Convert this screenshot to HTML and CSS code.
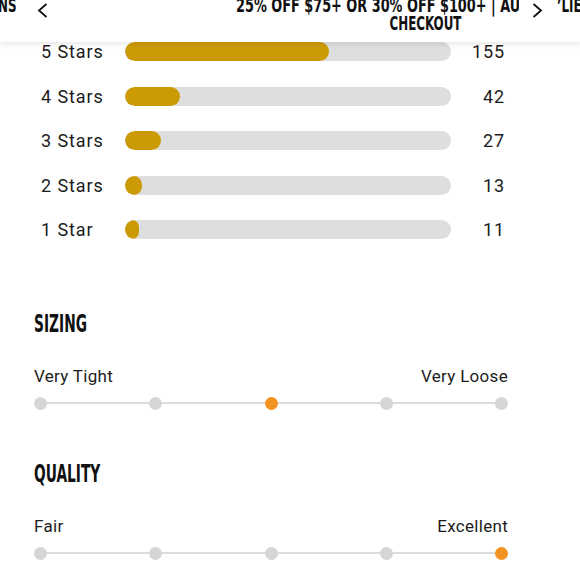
FILE: index.html
```html
<!DOCTYPE html>
<html lang="en">
<head>
<meta charset="utf-8">
<title>Reviews</title>
<link rel="stylesheet" href="styles.css">
</head>
<body>
<header class="promo">
  <div class="peek peek-left"><span class="promo-line">SHOP NEW ARRIVALS | FREE RETURNS</span></div>
  <button class="nav nav-prev" aria-label="Previous">
    <svg viewBox="0 0 11 15" width="11" height="15"><polyline points="9.5,1 2,7.5 9.5,14" fill="none" stroke="#111" stroke-width="1.8"/></svg>
  </button>
  <div class="viewport">
    <div class="slide">
      <div class="slide-row first"><span class="promo-line">25% OFF $75+ OR 30% OFF $100+ | AUTO-APPLIED AT</span></div>
      <div class="slide-row second"><span class="promo-line">CHECKOUT</span></div>
    </div>
  </div>
  <button class="nav nav-next" aria-label="Next">
    <svg viewBox="0 0 11 15" width="11" height="15"><polyline points="1.5,1 9,7.5 1.5,14" fill="none" stroke="#111" stroke-width="1.8"/></svg>
  </button>
  <div class="peek peek-right"><span class="promo-line">’LIEBE SALE</span></div>
</header>

<main class="reviews">
  <section class="ratings">
    <div class="rating-row"><span class="rating-label">5 Stars</span><div class="bar"><div class="fill" style="width:62.5%"></div></div><span class="rating-count">155</span></div>
    <div class="rating-row"><span class="rating-label">4 Stars</span><div class="bar"><div class="fill" style="width:16.9%"></div></div><span class="rating-count">42</span></div>
    <div class="rating-row"><span class="rating-label">3 Stars</span><div class="bar"><div class="fill" style="width:10.9%"></div></div><span class="rating-count">27</span></div>
    <div class="rating-row"><span class="rating-label">2 Stars</span><div class="bar"><div class="fill" style="width:5.2%"></div></div><span class="rating-count">13</span></div>
    <div class="rating-row"><span class="rating-label">1 Star</span><div class="bar"><div class="fill" style="width:4.4%"></div></div><span class="rating-count">11</span></div>
  </section>

  <div class="fits">
    <section class="fit">
      <h2 class="fit-title"><span class="cond">SIZING</span></h2>
      <div class="fit-ends"><span>Very Tight</span><span>Very Loose</span></div>
      <div class="scale">
        <span class="dot"></span><span class="dot"></span><span class="dot active"></span><span class="dot"></span><span class="dot"></span>
      </div>
    </section>
    <section class="fit">
      <h2 class="fit-title"><span class="cond">QUALITY</span></h2>
      <div class="fit-ends"><span>Fair</span><span>Excellent</span></div>
      <div class="scale">
        <span class="dot"></span><span class="dot"></span><span class="dot"></span><span class="dot"></span><span class="dot active"></span>
      </div>
    </section>
  </div>
</main>
</body>
</html>
```
FILE: styles.css
```css
* { box-sizing: border-box; }

html, body {
  margin: 0;
  padding: 0;
  background: #ffffff;
}

body {
  width: 580px;
  height: 580px;
  overflow: hidden;
  font-family: Roboto, "Liberation Sans", Arial, sans-serif;
  color: #1c1c1c;
}

/* ---------- promo header ---------- */
.promo {
  position: relative;
  z-index: 2;
  display: flex;
  height: 42px;
  background: #ffffff;
  box-shadow: 0 2px 6px rgba(0, 0, 0, 0.10);
  overflow: hidden;
}

.promo-line {
  display: inline-block;
  white-space: nowrap;
  font-family: "DejaVu Sans Condensed", "DejaVu Sans", sans-serif;
  font-stretch: condensed;
  font-weight: bold;
  font-size: 20px;
  line-height: 18px;
  color: #111111;
  transform: scaleX(0.66);
}

.peek {
  display: flex;
  overflow: hidden;
  margin-top: -4px;
  height: 46px;
}

.peek-left {
  width: 16px;
  justify-content: flex-end;
}

.peek-left .promo-line { transform-origin: right center; }

.peek-right {
  flex: 1;
  justify-content: flex-start;
}

.peek-right .promo-line { transform-origin: left center; }

.nav {
  display: flex;
  align-items: flex-start;
  border: 0;
  margin: 0;
  background: #ffffff;
  cursor: pointer;
}

.nav svg { display: block; }

.nav-prev {
  width: 38px;
  padding: 3px 0 0 21px;
}

.nav-next {
  width: 38px;
  padding: 3px 0 0 13px;
}

.viewport {
  width: 465px;
  overflow: hidden;
  margin-top: -4px;
  height: 46px;
}

.slide {
  width: 378px;
  margin-left: 182px;
}

.slide-row {
  height: 18px;
  white-space: nowrap;
}

.slide-row.first .promo-line {
  transform: scaleX(0.715);
  transform-origin: left center;
}

.slide-row.second {
  text-align: center;
}

/* ---------- ratings ---------- */
.ratings {
  display: flex;
  flex-direction: column;
  gap: 25.5px;
  width: 505px;
  padding-left: 41px;
}

.rating-row {
  display: grid;
  grid-template-columns: 84px 326px 1fr;
  align-items: center;
  height: 19px;
  font-size: 18px;
  letter-spacing: 0.9px;
  line-height: 19px;
}

.rating-count {
  text-align: right;
}

.bar {
  height: 19px;
  border-radius: 10px;
  background: #dedede;
  overflow: hidden;
}

.fill {
  height: 100%;
  border-radius: 10px;
  background: #cc9a04;
}

/* ---------- fit scales ---------- */
.fits {
  display: flex;
  flex-direction: column;
  gap: 49px;
  margin-top: 69.5px;
  padding: 0 72px 0 34px;
}

.fit-title {
  margin: 0;
  height: 30px;
  line-height: 30px;
  font-weight: normal;
}

.cond {
  display: inline-block;
  font-family: "DejaVu Sans Condensed", "DejaVu Sans", sans-serif;
  font-stretch: condensed;
  font-weight: bold;
  font-size: 24.7px;
  color: #111111;
  transform: scaleX(0.62);
  transform-origin: left center;
}

.fit-ends {
  display: flex;
  justify-content: space-between;
  margin-top: 27.5px;
  height: 20px;
  font-size: 17px;
  line-height: 20px;
  letter-spacing: 0.3px;
}

.scale {
  position: relative;
  display: flex;
  justify-content: space-between;
  margin-top: 10.5px;
  height: 13px;
}

.scale::before {
  content: "";
  position: absolute;
  left: 6px;
  right: 6px;
  top: 5.5px;
  height: 2px;
  background: #dcdcdc;
}

.dot {
  position: relative;
  width: 13px;
  height: 13px;
  border-radius: 50%;
  background: #d6d6d6;
}

.dot.active {
  background: #f39322;
}
```
